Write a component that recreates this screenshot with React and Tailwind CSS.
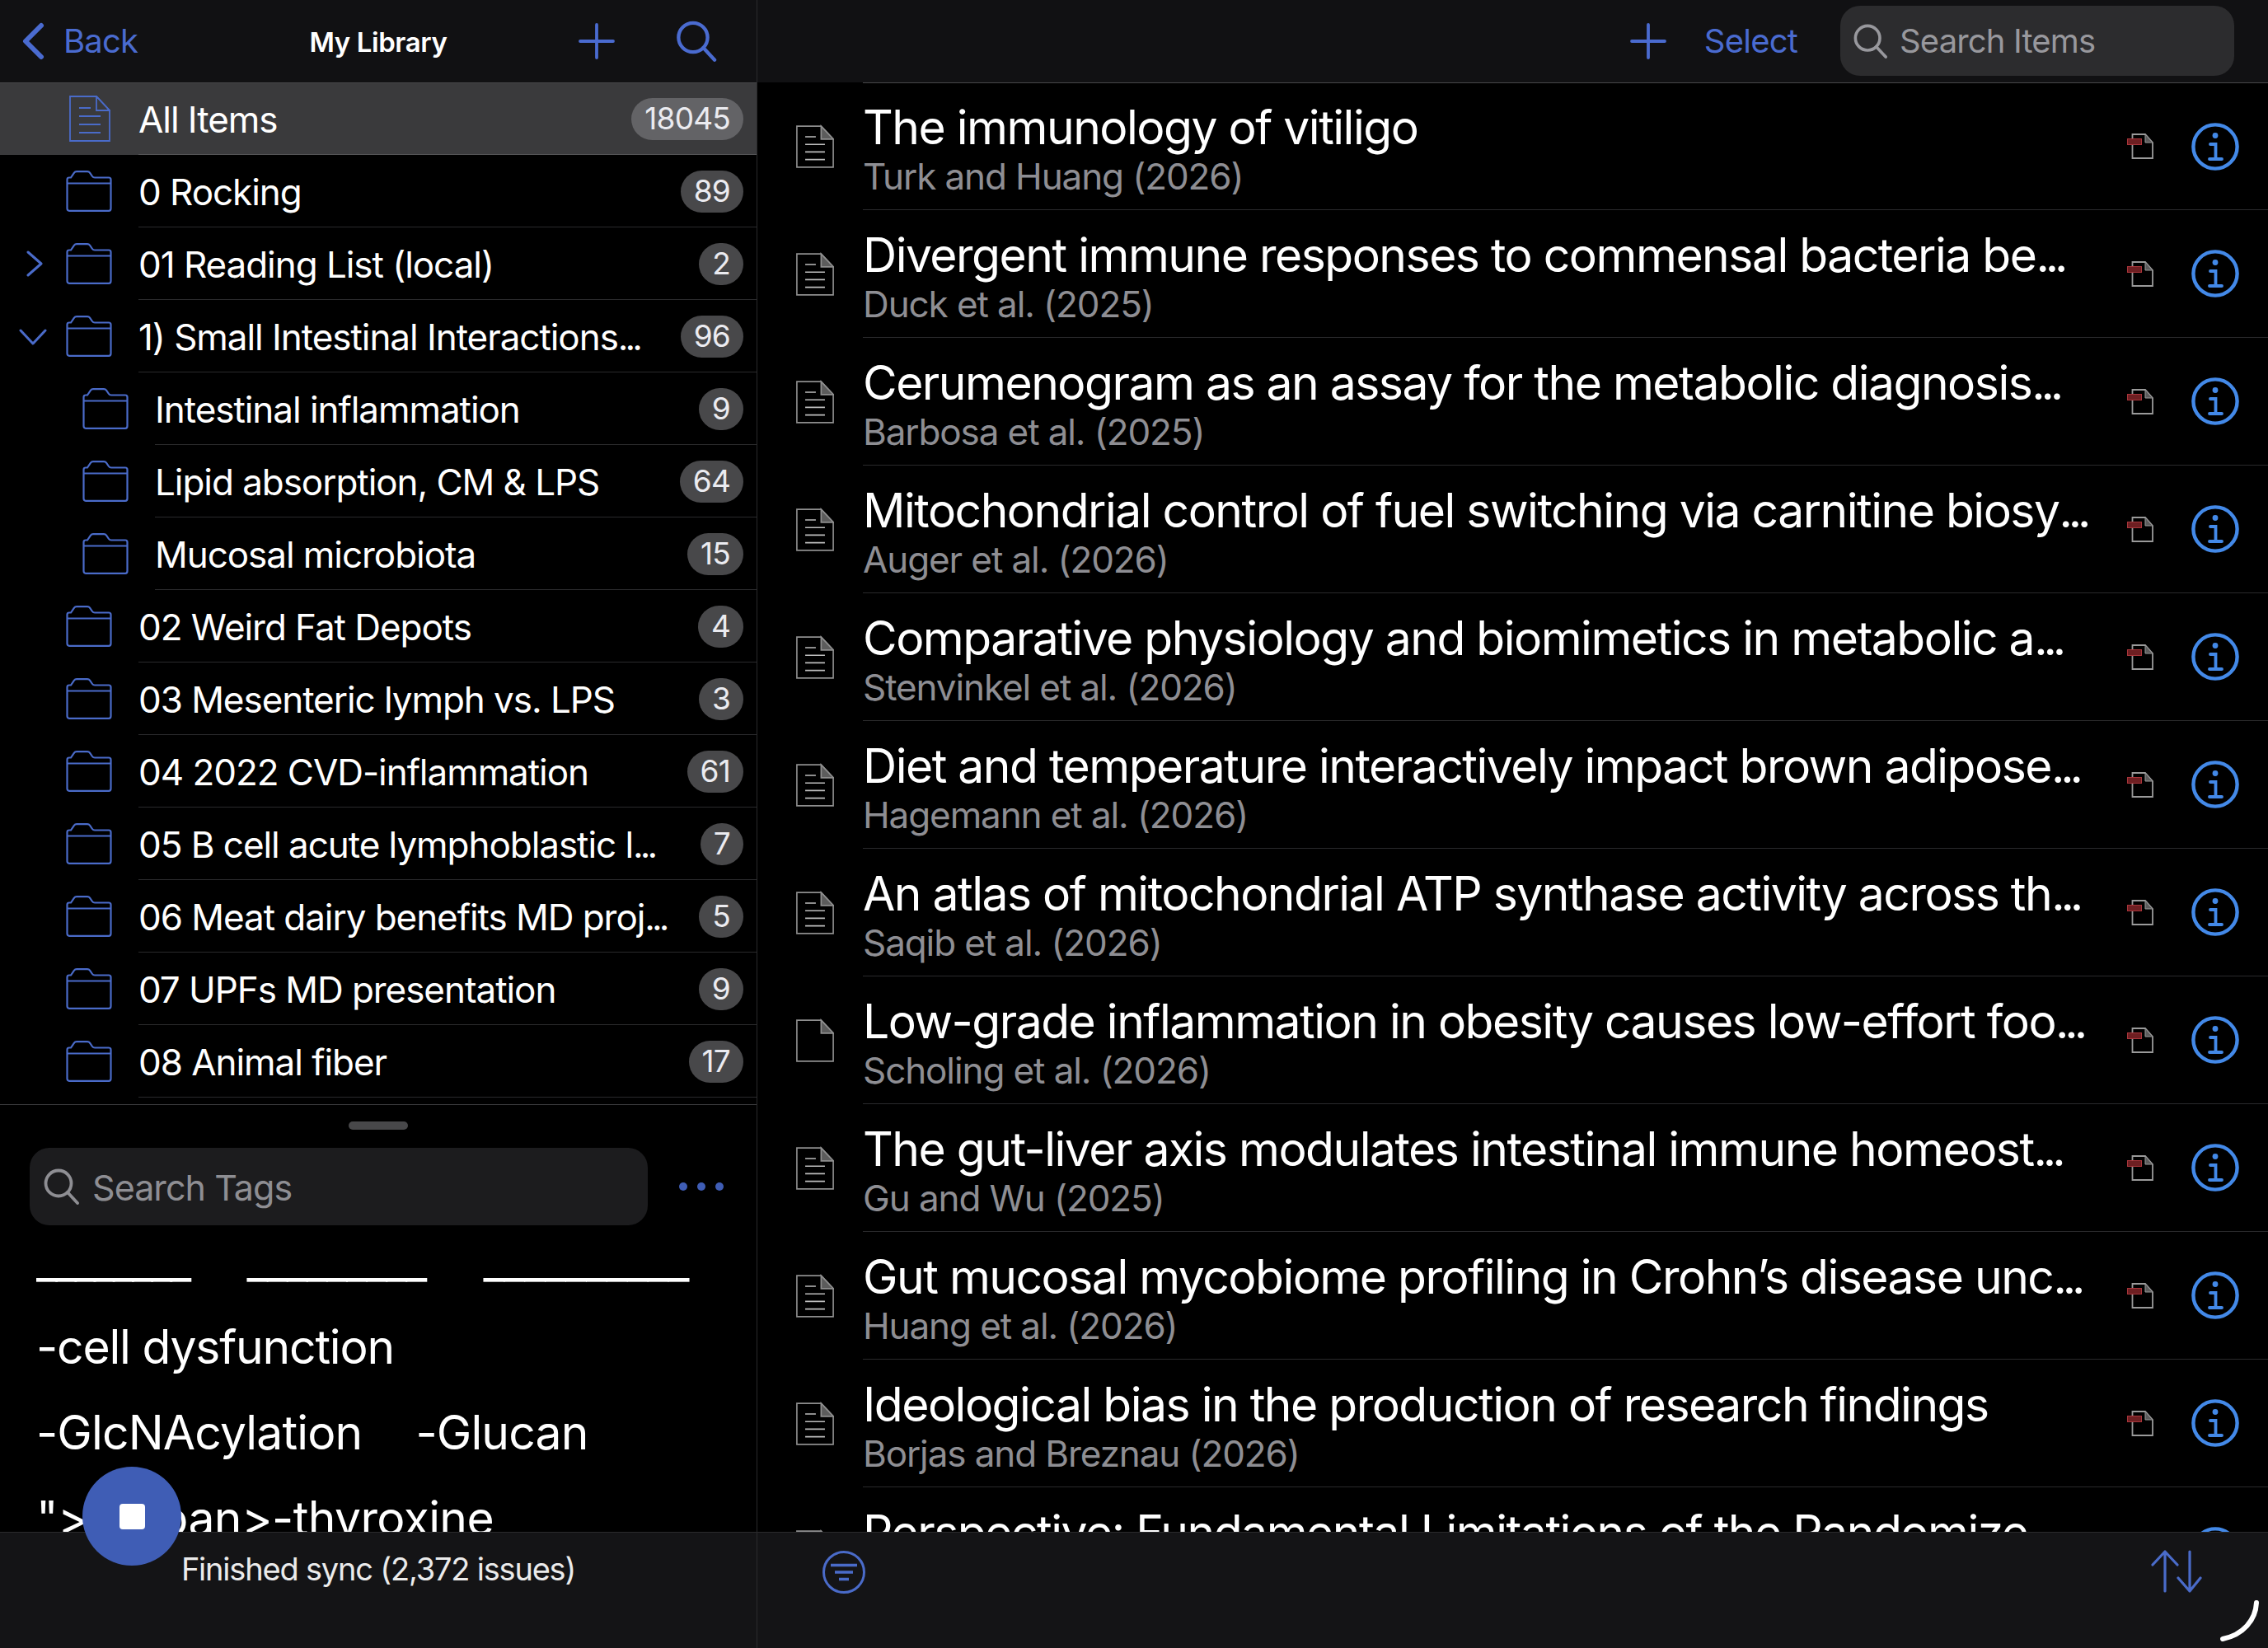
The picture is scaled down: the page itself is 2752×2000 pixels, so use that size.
import React from "react";

const folders = [
  { name: "0 Rocking", count: 89 },
  { name: "01 Reading List (local)", count: 2, arrow: "right" },
  { name: "1) Small Intestinal Interactions…", count: 96, arrow: "down" },
  { name: "Intestinal inflammation", count: 9, nested: true },
  { name: "Lipid absorption, CM & LPS", count: 64, nested: true },
  { name: "Mucosal microbiota", count: 15, nested: true },
  { name: "02 Weird Fat Depots", count: 4 },
  { name: "03 Mesenteric lymph vs. LPS", count: 3 },
  { name: "04 2022 CVD-inflammation", count: 61 },
  { name: "05 B cell acute lymphoblastic l…", count: 7 },
  { name: "06 Meat dairy benefits MD proj…", count: 5 },
  { name: "07 UPFs MD presentation", count: 9 },
  { name: "08 Animal fiber", count: 17 },
];

const items = [
  ["The immunology of vitiligo", "Turk and Huang (2026)"],
  ["Divergent immune responses to commensal bacteria be…", "Duck et al. (2025)"],
  ["Cerumenogram as an assay for the metabolic diagnosis…", "Barbosa et al. (2025)"],
  ["Mitochondrial control of fuel switching via carnitine biosy…", "Auger et al. (2026)"],
  ["Comparative physiology and biomimetics in metabolic a…", "Stenvinkel et al. (2026)"],
  ["Diet and temperature interactively impact brown adipose…", "Hagemann et al. (2026)"],
  ["An atlas of mitochondrial ATP synthase activity across th…", "Saqib et al. (2026)"],
  ["Low-grade inflammation in obesity causes low-effort foo…", "Scholing et al. (2026)", true],
  ["The gut-liver axis modulates intestinal immune homeost…", "Gu and Wu (2025)"],
  ["Gut mucosal mycobiome profiling in Crohn’s disease unc…", "Huang et al. (2026)"],
  ["Ideological bias in the production of research findings", "Borjas and Breznau (2026)"],
  // author line sits under the bottom bar in the screenshot, so it is left empty
  ["Perspective: Fundamental Limitations of the Randomize", "\u00a0"],
];

// the reference's ellipsis is much narrower than Inter's
const Clipped = ({ text }) => {
  if (!text.endsWith("…")) return text;
  return (
    <>
      {text.slice(0, -1)}
      <span className="tracking-[-0.09em]">...</span>
    </>
  );
};

const SearchIcon = ({ className }) => (
  <svg viewBox="0 0 44 44" fill="none" stroke="currentColor" strokeWidth="3.8" strokeLinecap="round" className={className}>
    <circle cx="18" cy="18" r="15.5" />
    <path d="M29 29 L41 42" />
  </svg>
);

const PlusIcon = ({ className }) => (
  <svg viewBox="0 0 44 44" fill="none" stroke="currentColor" strokeWidth="3.8" strokeLinecap="round" className={className}>
    <path d="M22 2 V42 M2 22 H42" />
  </svg>
);

const FolderIcon = () => (
  <svg viewBox="0 0 56 50" fill="none" stroke="#4a6bc9" strokeWidth="2.2" className="w-[56px] h-[50px] shrink-0">
    <path d="M1.5 15.5 V11 Q1.5 8.5 4 8.5 H6 L10 2.6 Q11 1.2 13 1.2 H26 Q28 1.2 29 2.6 L32 7 Q33 8.5 35 8.5 H52 Q54.5 8.5 54.5 11 V46 Q54.5 48.8 52 48.8 H4 Q1.5 48.8 1.5 46 V15.5 H54.5 V11" />
  </svg>
);

const DocIcon = ({ color = "#4a6bc9", lineColor = "#4a6bc9", foldFill = "none", lines = true, className }) => (
  <svg viewBox="0 0 50 56" fill="none" className={className}>
    <path d="M1 1 H33 L49 18 V55 H1 Z" stroke={color} strokeWidth="1.8" />
    <path d="M33 1 V18 H49 Z" stroke={color} strokeWidth="1.8" fill={foldFill} />
    {lines && (
      <path d="M12 15 H26 M12 25 H38 M12 35 H38 M12 45 H38" stroke={lineColor} strokeWidth="1.8" />
    )}
  </svg>
);

const PdfIcon = () => (
  <svg viewBox="0 0 32 31" fill="none" className="w-[32px] h-[31px] shrink-0">
    <path d="M6.5 1 H22 L31 11 V30 H6.5 Z" stroke="#9a9a9a" strokeWidth="1.8" />
    <path d="M22 1 V11 H31 Z" fill="#5c5c5c" stroke="#9a9a9a" strokeWidth="1" />
    <rect x="0.5" y="6.5" width="17" height="7" fill="#6e1f22" stroke="#a8353a" strokeWidth="1" />
  </svg>
);

const InfoIcon = () => (
  <svg viewBox="0 0 58 58" fill="none" stroke="#4389e8" className="w-[58px] h-[58px] shrink-0">
    <circle cx="29" cy="29" r="26.6" strokeWidth="4.4" />
    <circle cx="29" cy="15.5" r="3.4" fill="#4389e8" stroke="none" />
    <path d="M23 26 H29.5 V44 M22 44 H37" strokeWidth="3.8" strokeLinecap="round" />
  </svg>
);

const Badge = ({ value, active }) => (
  <span className={`h-[51px] min-w-[52px] mt-[1px] px-[16px] rounded-full flex items-center justify-center text-[37px] text-[#ebebf0] tracking-[-0.8px] ${active ? "bg-[#636366]" : "bg-[#48484a]"}`}>
    {value}
  </span>
);

const FolderRow = ({ name, count, arrow, nested }) => (
  <div className="relative h-[88px] shrink-0 flex items-center">
    {arrow === "right" && (
      <svg viewBox="0 0 20 32" fill="none" stroke="#4a6bc9" strokeWidth="3" strokeLinecap="round" strokeLinejoin="round" className="absolute left-[32px] top-[28px] w-[20px] h-[32px]">
        <path d="M2 2 L18 16 L2 30" />
      </svg>
    )}
    {arrow === "down" && (
      <svg viewBox="0 0 34 20" fill="none" stroke="#4a6bc9" strokeWidth="3" strokeLinecap="round" strokeLinejoin="round" className="absolute left-[23px] top-[35px] w-[34px] h-[20px]">
        <path d="M2 2 L17 18 L32 2" />
      </svg>
    )}
    <div className={nested ? "ml-[100px]" : "ml-[80px]"}>
      <FolderIcon />
    </div>
    <div className="self-stretch flex-1 flex items-center justify-between ml-[32px] pr-[16px] border-b border-[#2a2a2c]">
      <span className="mt-[3px] text-[44px] text-white whitespace-nowrap tracking-[-1.05px]">
        <Clipped text={name} />
      </span>
      <Badge value={count} />
    </div>
  </div>
);

const ItemRow = ({ title, author, blank, first }) => (
  <div className="h-[155px] shrink-0 flex">
    <div className="w-[128px] shrink-0 flex items-center pl-[47px]">
      <DocIcon color="#8e8e8e" lineColor="#bdbdbd" foldFill="#5c5c5c" lines={!blank} className="w-[46px] h-[56px]" />
    </div>
    <div className={`flex-1 min-w-0 flex items-center pr-[35px] border-b border-[#2a2a2c] ${first ? "border-t border-t-[#48484a]" : ""}`}>
      <div className="flex-1 min-w-0 mt-[6px]">
        <div className="text-[57px] leading-[67px] text-white whitespace-nowrap tracking-[-1.5px]">
          <Clipped text={title} />
        </div>
        <div className="text-[44px] leading-[52px] text-[#8e8e93] whitespace-nowrap tracking-[-1.1px]">{author}</div>
      </div>
      <PdfIcon />
      <div className="ml-[46px]">
        <InfoIcon />
      </div>
    </div>
  </div>
);

const App = () => {
  return (
    <div className="relative w-[2752px] h-[2000px] flex bg-black overflow-hidden font-['Inter',sans-serif]">
      {/* Left column */}
      <div className="w-[919px] h-full shrink-0 flex flex-col border-r border-[#2a2a2c]">
        <div className="relative z-10 h-[101px] shrink-0 grid grid-cols-[1fr_auto_1fr] items-center bg-[#111113] border-b border-[#48484a] px-[27px]">
          <div className="flex items-center gap-[23px] text-[#4a6bd0]">
            <svg viewBox="0 0 27 46" fill="none" stroke="currentColor" strokeWidth="6" strokeLinecap="round" strokeLinejoin="round" className="w-[27px] h-[46px]">
              <path d="M23 4 L4 23 L23 42" />
            </svg>
            <span className="text-[40px] tracking-[-0.8px]">Back</span>
          </div>
          <span className="text-[33px] font-semibold text-white tracking-[-0.4px] mt-[3px]">My Library</span>
          <div className="flex items-center justify-end gap-[74px] pr-[20px] text-[#4a6bd0]">
            <PlusIcon className="w-[44px] h-[44px]" />
            <SearchIcon className="w-[51px] h-[50px]" />
          </div>
        </div>

        <div className="-mt-px shrink-0 flex flex-col">
          <div className="relative h-[88px] shrink-0 flex items-center bg-[#3a3a3c]">
            <div className="ml-[84px]">
              <DocIcon className="w-[50px] h-[56px]" />
            </div>
            <div className="self-stretch flex-1 flex items-center justify-between pr-[16px] ml-[34px] border-b border-[#545456]">
              <span className="mt-[3px] text-[44px] text-white tracking-[-1.05px]">All Items</span>
              <Badge value={18045} active />
            </div>
          </div>
          {folders.map((f) => (
            <FolderRow key={f.name} {...f} />
          ))}
        </div>

        <div className="mt-[8px] flex-1 min-h-0 overflow-hidden border-t border-[#3a3a3c] flex flex-col">
          <div className="mt-[20px] mx-auto w-[72px] h-[10px] rounded-full bg-[#48484a] shrink-0" />
          <div className="mt-[22px] ml-[36px] flex items-center shrink-0">
            <div className="w-[750px] h-[94px] rounded-[24px] bg-[#1c1c1e] flex items-center pl-[17px] text-[#8e8e93]">
              <SearchIcon className="w-[44px] h-[44px]" />
              <span className="ml-[15px] mt-[3px] text-[43px] tracking-[-0.95px]">Search Tags</span>
            </div>
            <div className="ml-[38px] flex gap-[12px]">
              <span className="w-[10px] h-[10px] rounded-full bg-[#3f5db5]" />
              <span className="w-[10px] h-[10px] rounded-full bg-[#3f5db5]" />
              <span className="w-[10px] h-[10px] rounded-full bg-[#3f5db5]" />
            </div>
          </div>
          <div className="-mt-[8px] pl-[44px] text-[57px] leading-[104px] text-white whitespace-nowrap tracking-[-1.2px]">
            <div className="h-[104px] flex gap-[70px]">
              <span className="tracking-[-2.8px]">________</span>
              <span className="tracking-[-1.9px]">_________</span>
              <span className="tracking-[-1.1px]">__________</span>
            </div>
            <div className="h-[104px]">-cell dysfunction</div>
            <div className="h-[104px] flex gap-[65px] tracking-[-0.85px]">
              <span>-GlcNAcylation</span>
              <span>-Glucan</span>
            </div>
            <div className="h-[104px] tracking-[-0.6px]">{'"></span>-thyroxine'}</div>
          </div>
        </div>

        <div className="relative z-10 h-[141px] shrink-0 bg-[#141416] border-t border-[#2a2a2c] flex justify-center pt-[21px]">
          <span className="text-[38px] leading-[46px] text-[#ebebeb] tracking-[-1.2px]">Finished sync (2,372 issues)</span>
        </div>
      </div>

      {/* Right column */}
      <div className="flex-1 min-w-0 h-full flex flex-col">
        <div className="relative z-10 h-[100px] shrink-0 bg-[#111113] flex items-center justify-end pr-[41px]">
          <PlusIcon className="w-[44px] h-[44px] text-[#4a6bd0]" />
          <span className="ml-[46px] text-[40px] text-[#4a6bd0] tracking-[-0.8px]">Select</span>
          <div className="ml-[52px] w-[478px] h-[85px] -mt-[1px] rounded-[24px] bg-[#2c2c2e] flex items-center pl-[16px] text-[#98989d]">
            <SearchIcon className="w-[42px] h-[44px]" />
            <span className="ml-[14px] text-[40px] tracking-[-0.85px]">Search Items</span>
          </div>
        </div>
        <div className="flex-1 min-h-0 overflow-hidden flex flex-col">
          {items.map(([title, author, blank], i) => (
            <ItemRow key={title} title={title} author={author} blank={blank} first={i === 0} />
          ))}
          <div className="h-[155px] shrink-0" />
        </div>
        <div className="relative z-10 h-[141px] shrink-0 bg-[#141416] border-t border-[#2a2a2c] flex justify-between pl-[79px] pr-[80px] pt-[21px]">
          <svg viewBox="0 0 52 54" fill="none" stroke="#4a6bc9" strokeWidth="3" className="w-[52px] h-[54px]">
            <circle cx="26" cy="27" r="24.5" />
            <path d="M10 18.5 H42 M15 27 H37 M20 35.5 H32" strokeWidth="3.6" />
          </svg>
          <svg viewBox="0 0 62 52" fill="none" stroke="#4a6bc9" strokeWidth="3.2" strokeLinecap="round" strokeLinejoin="round" className="w-[62px] h-[52px]">
            <path d="M17 50 V2 M2 18 L17 2 L32 18" />
            <path d="M47 2 V50 M33 34 L47 50 L60 34" />
          </svg>
          <svg viewBox="0 0 50 50" fill="none" stroke="white" strokeWidth="6" strokeLinecap="round" className="absolute right-[10px] bottom-[8px] w-[50px] h-[50px]">
            <path d="M46 3 C45 24 30 42 5 47" />
          </svg>
        </div>
      </div>

      {/* Floating stop button */}
      <button className="absolute left-[100px] top-[1780px] z-20 w-[120px] h-[120px] rounded-full bg-[#3f5db5] flex items-center justify-center">
        <span className="w-[31px] h-[31px] rounded-[4px] bg-white" />
      </button>
    </div>
  );
};

export default App;
